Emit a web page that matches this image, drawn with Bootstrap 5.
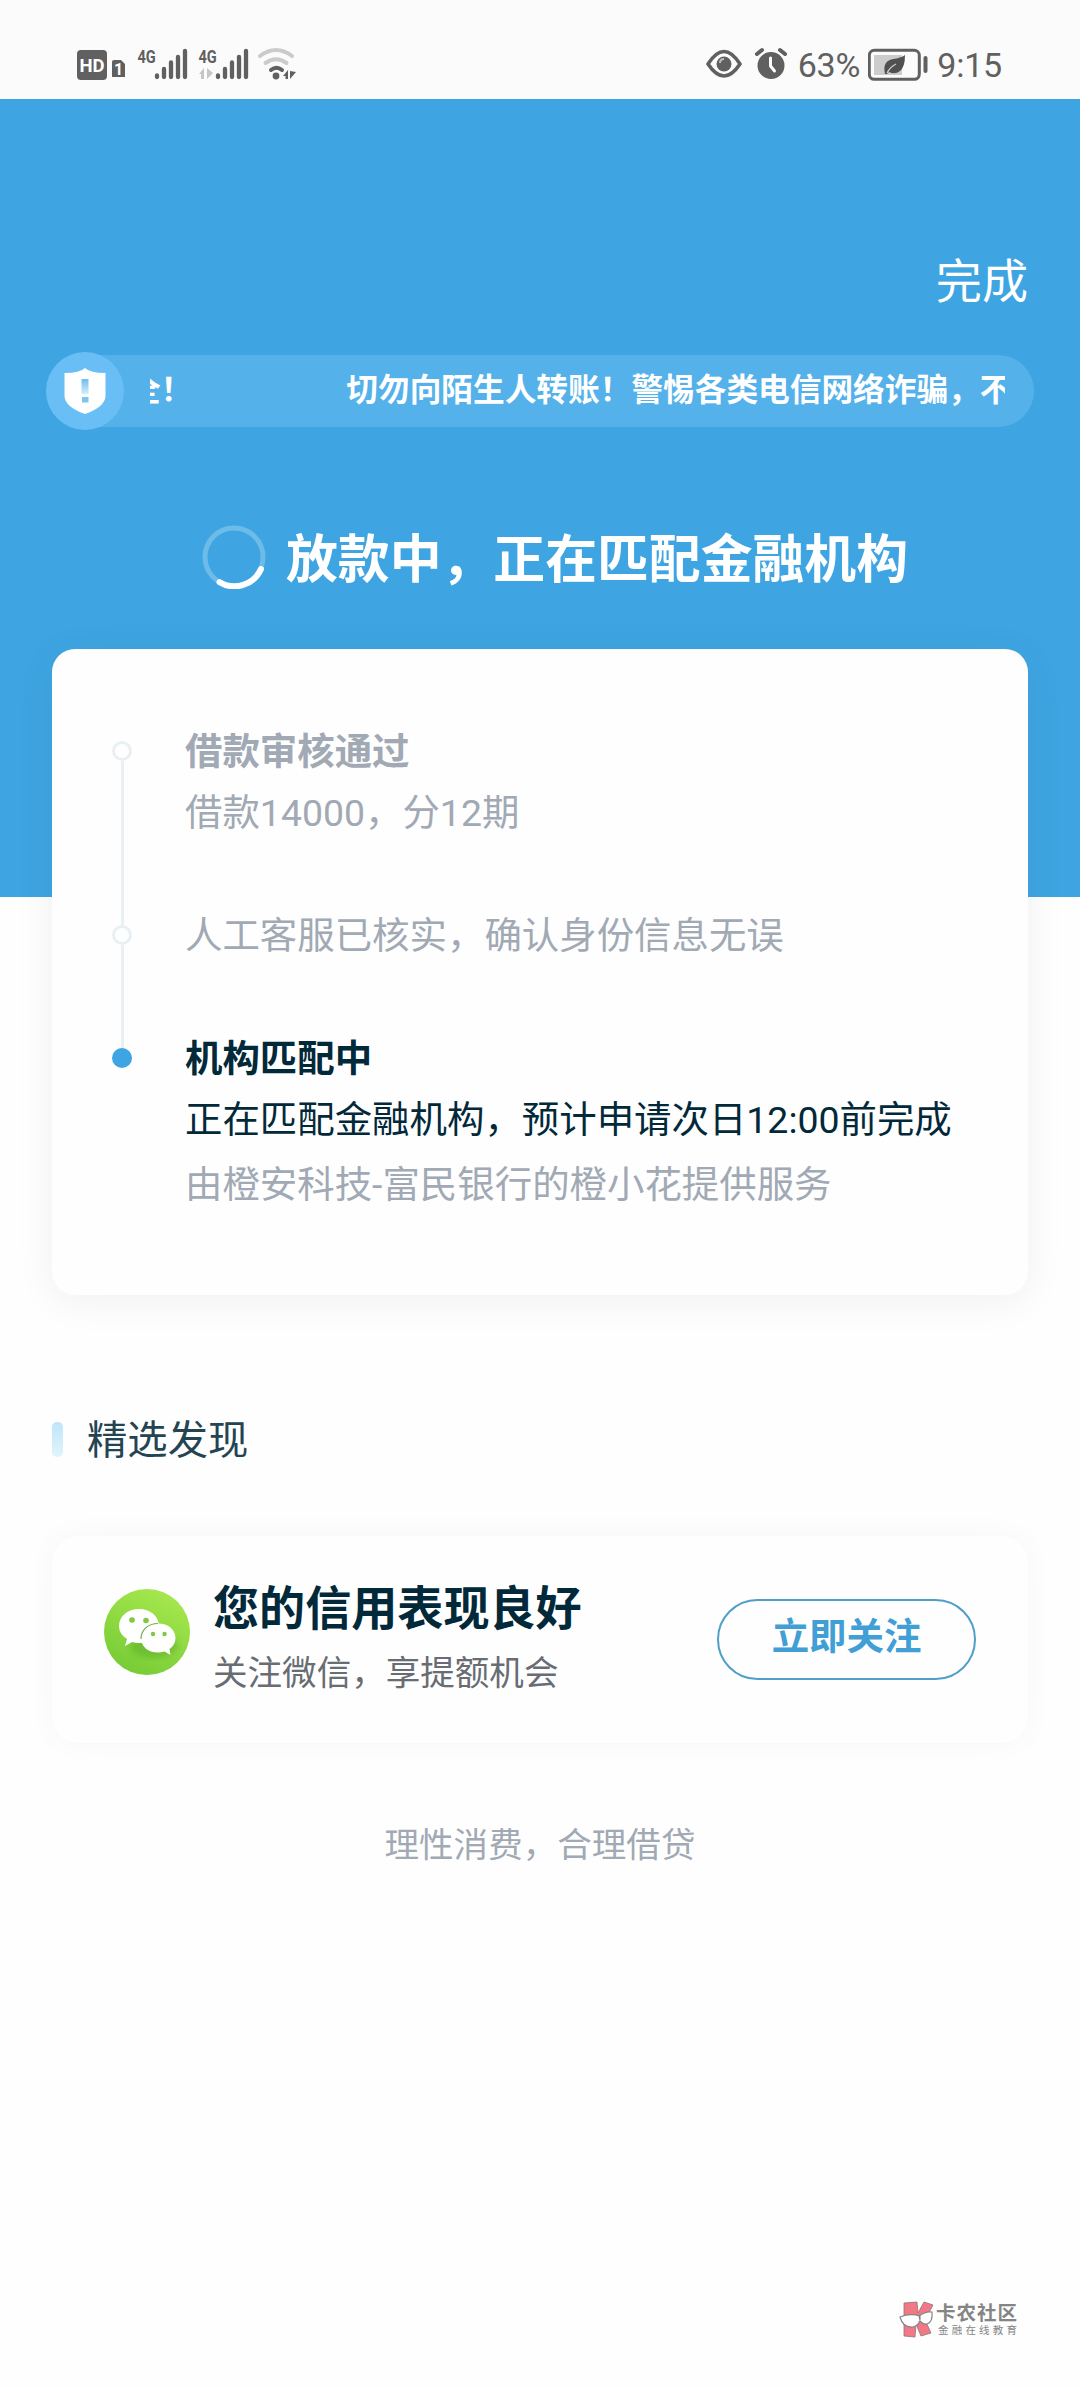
<!DOCTYPE html>
<html lang="zh-CN">
<head>
<meta charset="utf-8">
<meta name="viewport" content="width=device-width, initial-scale=1">
<title>放款中</title>
<link href="https://cdn.jsdelivr.net/npm/bootstrap@5.3.0/dist/css/bootstrap.min.css" rel="stylesheet">
<style>
  :root { --sky: #3ea5e2; --ink: #02293a; --muted-ink: #a1a9b4; --rail: #e8f0f3; }
  body { font-family: Roboto, "Noto Sans CJK SC", sans-serif; background: #fefefe; color: var(--ink); min-height: 2388px; }
  svg { display: block; flex-shrink: 0; }
  .status-bar { height: 99px; background: #fbfbfb; color: #606060; padding: 30px 78px 0 77px; font-size: 34px; line-height: 70px; letter-spacing: -.2px; }
  .hero { height: 798px; background: var(--sky); padding: 148px 46px 0; }
  .done-link { font-size: 46.08px; line-height: 70px; padding-right: 6px; }
  .notice { height: 78px; margin-top: 35px; }
  .notice-icon { width: 78px; height: 78px; background: #69bff5; z-index: 1; }
  .notice-pill { height: 72px; background: #55b1ea; border-radius: 0 36px 36px 0; margin-left: -39px; padding-left: 65px; padding-right: 29px; }
  .notice-track { gap: 154px; font-size: 31.68px; line-height: 71px; font-weight: 700; }
  .notice-track span:first-child { margin-left: -21px; }
  .hero-title { font-size: 51.84px; line-height: 80px; font-weight: 700; margin-top: 87px; gap: 20px; padding-left: 30px; }
  .hero-title span { padding-top: 4px; margin-bottom: -4px; }
  .content { padding: 0 52px; margin-top: -248px; }
  .progress-card { height: 646px; border: 0; border-radius: 23px; background: #fefefe; box-shadow: 0 6px 40px rgba(0,0,0,.06); padding: 71px 58px 0 60px; }
  .step { font-size: 37.44px; line-height: 61px; color: var(--muted-ink); }
  .step-text { padding: 2px 0 60px 53px; white-space: nowrap; }
  .step-text p { margin: 0; }
  .rail-col { width: 20px; }
  .rail-col::before { content: ""; width: 3px; height: 21px; background: var(--rail); }
  .step:first-child .rail-col::before { background: transparent; }
  .rail-dot { width: 20px; height: 20px; border: 3px solid var(--rail); border-radius: 50%; }
  .rail-line { width: 3px; background: var(--rail); }
  .step.now { color: var(--ink); }
  .now .rail-dot { background: var(--sky); border-color: var(--sky); }
  .now .provider { color: var(--muted-ink); line-height: 69px; }
  .section-head { margin-top: 109px; font-size: 40.32px; line-height: 70px; color: #244452; gap: 24px; }
  .section-head i { width: 11px; height: 35px; border-radius: 5px; background: linear-gradient(#bfe5fb, #e1f4fb); }
  .section-head span { padding-top: 2px; margin-bottom: -2px; }
  .promo-card { height: 207px; margin-top: 62px; border: 0; border-radius: 26px; background: #fefefe; box-shadow: 0 0 30px rgba(0,0,0,.035); padding: 0 52px; }
  .promo-card > svg { margin-bottom: 16px; }
  .promo-words { padding: 2px 0 0 23px; }
  .promo-title { font-size: 46.08px; line-height: 64px; font-weight: 700; }
  .promo-sub { font-size: 34.56px; line-height: 64px; color: #686c73; }
  .follow-btn { width: 259px; height: 81px; border: 2px solid #4f9fc9; color: #419fd6; font-size: 37.44px; line-height: 73px; font-weight: 700; padding: 0 0 4px; }
  .slogan { font-size: 34.56px; line-height: 60px; color: var(--muted-ink); margin-top: 72px; }
  .community { margin: 424px 61px 0 0; }
</style>
</head>
<body>
<header class="status-bar d-flex justify-content-between">
  <svg width="222" height="70" viewBox="77 30 222 70" fill="#606060" font-family="Roboto" font-weight="700">
    <rect x="77" y="50" width="30" height="30" rx="4"/>
    <text x="79.4" y="71.8" font-size="18.5" fill="#fff" textLength="25">HD</text>
    <path d="M114 60h7l4 4v13h-13V62q0-2 2-2z"/>
    <text x="114" y="75" font-size="16" fill="#fff">1</text>
    <text x="137.5" y="62.5" font-size="18.5" textLength="18" lengthAdjust="spacingAndGlyphs">4G</text>
    <path d="M157 75.5v1.5M164 69v8M171 62.5v14.5M178 57v20M185 51v26" stroke="#606060" stroke-width="4.3" stroke-linecap="round"/>
    <text x="198.5" y="62.5" font-size="18.5" textLength="18" lengthAdjust="spacingAndGlyphs">4G</text>
    <path d="M218 75.5v1.5M225 69v8M232 62.5v14.5M239 57v20M246 51v26" stroke="#606060" stroke-width="4.3" stroke-linecap="round"/>
    <path d="M199 74l5-6v11h-3v-5zM207 68v11l6-6z" fill="#c6c6c6"/>
    <g fill="none" stroke-linecap="round" stroke-width="4">
      <path d="M260 56q16-12 32 0M265.5 63q10.500-7.500 21 0" stroke="#cbcbcb"/>
      <path d="M271 70q5.500-4.500 11 0" stroke="#606060"/>
    </g>
    <circle cx="276" cy="76" r="3.4"/>
    <path d="M283 76l5-6v9h-2.500v-3zM290 71v8l6-7z"/>
  </svg>
  <div class="d-flex">
    <svg width="92" height="70" viewBox="708 30 92 70">
      <path d="M710 64Q726 39 742 64Q726 88 710 64z" fill="none" stroke="#606060" stroke-width="3.6" stroke-linejoin="round"/>
      <circle cx="726" cy="64" r="7.5" fill="#606060"/><path d="M722 63q0-4 4-4" stroke="#bbb" stroke-width="2" fill="none"/>
      <circle cx="773" cy="65.5" r="13.5" fill="#606060"/>
      <path d="M759 54l5-4M787 54l-5-4" stroke="#606060" stroke-width="4" stroke-linecap="round"/>
      <path d="M772.5 58v8l4 5" stroke="#fff" stroke-width="3" fill="none" stroke-linecap="round"/>
    </svg>
    <span>63%</span>
    <svg class="ms-2" width="69" height="70" viewBox="868 30 69 70">
      <rect x="869.3" y="50.3" width="50" height="29" rx="5" fill="none" stroke="#606060" stroke-width="3"/>
      <rect x="874" y="55" width="28" height="20" fill="#ccc"/>
      <path d="M885 74q-3-13 8-15 8-1 12-4 0 12-5 16-5 4-11 1l-2 2z" fill="#505050"/>
      <path d="M887 73q3-6 9-9" stroke="#ccc" stroke-width="1.3" fill="none"/>
      <path d="M925.5 58v13" stroke="#606060" stroke-width="4" stroke-linecap="round"/>
    </svg>
    <span>9:15</span>
  </div>
</header>

<section class="hero text-white">
  <div class="done-link text-end">完成</div>
  <div class="notice d-flex align-items-center">
    <div class="notice-icon rounded-circle d-flex align-items-center justify-content-center flex-shrink-0 position-relative">
      <svg width="42" height="46" viewBox="0 0 42 46">
        <defs><linearGradient id="mark-fade" x2="0" y2="1"><stop stop-color="#6dbdf0"/><stop offset="1" stop-color="#d4effc"/></linearGradient></defs>
        <path d="M21 0Q26 5 41.500 5v23Q41 39 21 46 1 39 .5 28V5Q16 5 21 0z" fill="#fff"/>
        <path d="M17.500 11h7v15h-7z" fill="url(#mark-fade)"/><path d="M18 29h6.500v5.500H18z" fill="#7cc5ef"/>
      </svg>
    </div>
    <div class="notice-pill flex-grow-1 overflow-hidden">
      <div class="notice-track d-flex overflow-hidden text-nowrap"><span>全！</span><span>切勿向陌生人转账！警惕各类电信网络诈骗，不</span></div>
    </div>
  </div>
  <div class="hero-title d-flex justify-content-center align-items-center">
    <svg width="64" height="64" viewBox="0 0 64 64" fill="none">
      <circle cx="32" cy="32" r="29" stroke="#6cbbe9" stroke-width="5"/>
      <path d="M17.500 57.100A29 29 0 0 0 59 44" stroke="#fff" stroke-width="6" stroke-linecap="round"/>
    </svg>
    <span>放款中，正在匹配金融机构</span>
  </div>
</section>

<main class="content position-relative">
  <section class="card progress-card">
    <div class="step d-flex">
      <div class="rail-col d-flex flex-column align-items-center"><span class="rail-dot"></span><span class="rail-line flex-grow-1"></span></div>
      <div class="step-text"><p class="fw-bold">借款审核通过</p><p>借款14000，分12期</p></div>
    </div>
    <div class="step d-flex">
      <div class="rail-col d-flex flex-column align-items-center"><span class="rail-dot"></span><span class="rail-line flex-grow-1"></span></div>
      <div class="step-text"><p>人工客服已核实，确认身份信息无误</p></div>
    </div>
    <div class="step now d-flex">
      <div class="rail-col d-flex flex-column align-items-center"><span class="rail-dot"></span></div>
      <div class="step-text pb-0"><p class="fw-bold">机构匹配中</p><p>正在匹配金融机构，预计申请次日12:00前完成</p><p class="provider">由橙安科技-富民银行的橙小花提供服务</p></div>
    </div>
  </section>

  <div class="section-head d-flex align-items-center"><i></i><span>精选发现</span></div>

  <section class="card promo-card flex-row align-items-center">
    <svg width="86" height="88" viewBox="0 0 86 88">
      <defs>
        <linearGradient id="leaf" x1=".8" y1="0" x2=".3" y2="1"><stop stop-color="#a9e94f"/><stop offset="1" stop-color="#76cb35"/></linearGradient>
        <filter id="soft"><feGaussianBlur stdDeviation="3"/></filter>
      </defs>
      <circle cx="43" cy="44" r="43" fill="url(#leaf)"/>
      <ellipse cx="50" cy="58" rx="24" ry="12" fill="#4d9f22" opacity=".4" filter="url(#soft)"/>
      <path d="M35 21c11 0 20 7 20 17S46 55 35 55q-4 0-7-1l-7 4 2-7q-8-5-8-13c0-10 9-17 20-17z" fill="#fff"/>
      <path d="M54 35.500c10 0 17.500 6 17.500 14.500q0 7-6 11l1 6-6-3.500q-3 1-6.500 1c-10 0-17-6-17-14.500s7-14.500 17-14.500z" fill="#fff"/>
      <path d="M37 51c0-9 7-15.500 17-15.500" fill="none" stroke="#6fae4a" stroke-width="1.200"/>
      <g fill="#7fc842"><circle cx="28" cy="32" r="2.800"/><circle cx="42" cy="32.500" r="2.800"/><circle cx="49" cy="46" r="2.200"/><circle cx="60.500" cy="46" r="2.200"/></g>
    </svg>
    <div class="promo-words flex-grow-1 text-nowrap">
      <div class="promo-title">您的信用表现良好</div>
      <div class="promo-sub">关注微信，享提额机会</div>
    </div>
    <button type="button" class="btn follow-btn rounded-pill">立即关注</button>
  </section>

  <div class="slogan text-center">理性消费，合理借贷</div>
</main>

<footer class="community d-flex justify-content-end">
  <svg width="120" height="40" viewBox="900 2298 120 40" font-family="Noto Sans CJK SC" fill="#858585">
    <path d="M905 2302l13-1 1 11 6-11 9 3-8 15 6 13-10 3-5-12-1 13-11-1z" fill="#f37885" stroke="#8b7374" stroke-width=".8"/>
    <path d="M901 2316q10-4 20-1 1 9-7 11-10 1-13-10zM920 2315q7-5 13-4 1 10-5 12-7 1-8-8z" fill="#fff" stroke="#858585" stroke-width="1.2"/>
    <text x="937" y="2319" font-size="19.5" font-weight="700" textLength="81">卡农社区</text>
    <text x="939" y="2333" font-size="10.5" textLength="79">金融在线教育</text>
  </svg>
</footer>
<script src="https://cdn.jsdelivr.net/npm/bootstrap@5.3.0/dist/js/bootstrap.bundle.min.js"></script>
</body>
</html>
